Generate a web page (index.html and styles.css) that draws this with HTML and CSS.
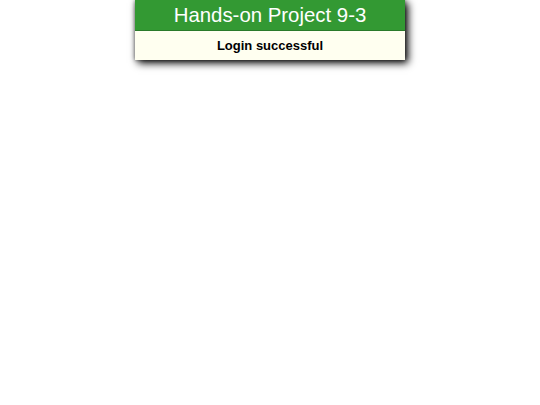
FILE: index.html
```
<!DOCTYPE html>
<html>
<head>
<meta charset="utf-8">
<title>Hands-on Project 9-3</title>
<link rel="stylesheet" href="styles.css">
</head>
<body>
<div class="panel">
  <header class="banner"><h1 class="title">Hands-on Project 9-3</h1></header>
  <article class="content"><p class="message">Login successful</p></article>
</div>
</body>
</html>
```
FILE: styles.css
```
html, body {
  margin: 0;
  padding: 0;
  background: #ffffff;
  font-family: "Liberation Sans", Arial, sans-serif;
}
body {
  min-height: 405px;
}
.panel {
  width: 270px;
  margin: 0 auto;
  box-shadow: 3px 3px 8px #000, 0 0 4px rgba(0, 0, 0, 0.5);
}
.banner {
  background: #339933;
  height: 30px;
  border-bottom: 1px solid #2a7a2a;
  display: flex;
  align-items: center;
  justify-content: center;
}
.title {
  margin: 0;
  color: #ffffff;
  font-size: 20.4px;
  font-weight: normal;
}
.content {
  background: #fffff0;
  height: 29px;
  display: flex;
  align-items: center;
  justify-content: center;
}
.message {
  margin: 0;
  font-size: 13px;
  font-weight: bold;
  color: #000;
}
```
